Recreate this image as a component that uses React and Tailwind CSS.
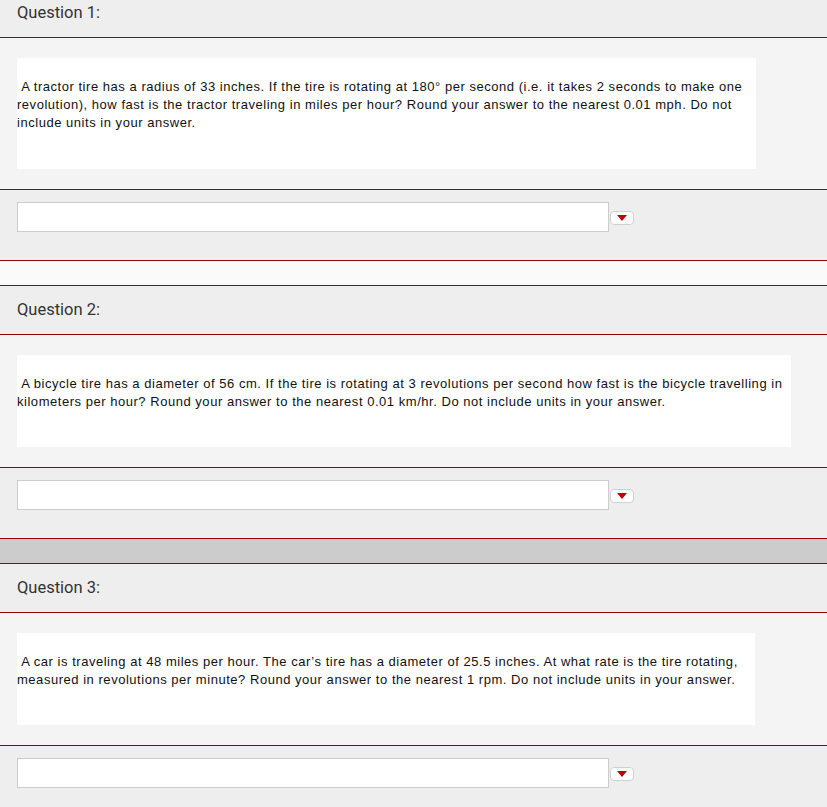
const questions = [
  {
    n: 1,
    box: 'w-[739px] pb-[37px]',
    lines: [
      '\u00a0A tractor tire has a radius of 33 inches. If the tire is rotating at 180° per second (i.e. it takes 2 seconds to make one',
      'revolution), how fast is the tractor traveling in miles per hour? Round your answer to the nearest 0.01 mph. Do not',
      'include units in your answer.',
    ],
    spacer: 'bg-[#fafafa]',
  },
  {
    n: 2,
    box: 'w-[774px] pb-[36px]',
    lines: [
      '\u00a0A bicycle tire has a diameter of 56 cm. If the tire is rotating at 3 revolutions per second how fast is the bicycle travelling in',
      'kilometers per hour? Round your answer to the nearest 0.01 km/hr. Do not include units in your answer.',
    ],
    spacer: 'bg-[#cccccc]',
  },
  {
    n: 3,
    box: 'w-[738px] pb-[36px]',
    lines: [
      '\u00a0A car is traveling at 48 miles per hour. The car\u2019s tire has a diameter of 25.5 inches. At what rate is the tire rotating,',
      'measured in revolutions per minute? Round your answer to the nearest 1 rpm. Do not include units in your answer.',
    ],
    spacer: null,
  },
]

function DropButton() {
  return (
    <div className="ml-[1px] mt-[9px] flex h-[14px] w-[24px] items-center justify-center rounded-[4px] border border-[#d0d0d0] bg-white">
      <svg width="10" height="6" viewBox="0 0 10 6">
        <path d="M0 0 L10 0 L5 6 Z" fill="#c00000" />
      </svg>
    </div>
  )
}

function Question({ q, first }) {
  return (
    <div>
      <div className={`flex h-[49px] items-center border-b border-[#990000] bg-[#eeeeee] pl-[17px] ${first ? '-mt-[11px]' : ''}`}>
        <span className="text-[16.5px] text-[#333]" style={{ fontFamily: 'Roboto, "Noto Sans", sans-serif' }}>
          Question {q.n}:
        </span>
      </div>
      <div className="border-b border-[#990000] bg-[#f4f4f4] px-[17px] py-5">
        <div
          className={`${q.box} bg-white pt-5 text-[13px] leading-[18px] tracking-[0.53px] text-[#111]`}
          style={{ fontFamily: '"Liberation Sans", Arial, sans-serif' }}
        >
          {q.lines.map((l, i) => (
            <div key={i} className="whitespace-nowrap">{l}</div>
          ))}
        </div>
      </div>
      <div className={`flex items-start bg-[#eeeeee] px-[17px] pt-3 pb-7 ${q.spacer ? 'border-b border-[#990000]' : ''}`}>
        <div className="h-[30px] w-[592px] border border-[#cccccc] bg-white" />
        <DropButton />
      </div>
      {q.spacer && <div className={`h-[25px] border-b border-[#990000] ${q.spacer}`} />}
    </div>
  )
}

export default function App() {
  return (
    <div className="h-[807px] w-full overflow-hidden bg-[#eeeeee]">
      {questions.map((q, i) => (
        <Question key={q.n} q={q} first={i === 0} />
      ))}
    </div>
  )
}
